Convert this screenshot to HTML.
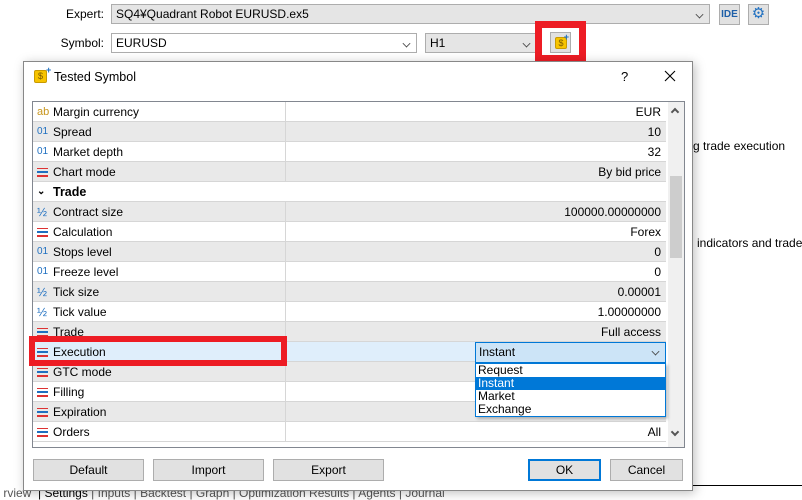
<!DOCTYPE html>
<html><head><meta charset="utf-8"><style>
*{box-sizing:border-box;margin:0;padding:0}
body{width:802px;height:498px;background:#fff;font-family:"Liberation Sans",sans-serif;font-size:12px;color:#000;position:relative;overflow:hidden}
.a{position:absolute;white-space:nowrap}
.combo{position:absolute;border:1px solid #adadad;height:20px;line-height:18px;padding-left:4px}
.chev{position:absolute;right:6px;top:6px;width:7px;height:7px;border-right:1px solid #444;border-bottom:1px solid #444;transform:rotate(45deg) scale(.8)}
.row{position:absolute;left:33px;width:633px;height:20px;line-height:20px;border-bottom:1px solid #d6d6d6}
.row .n{position:absolute;left:20px}
.row .v{position:absolute;right:5px}
.row .d{position:absolute;left:252px;top:0;bottom:0;border-left:1px solid #d6d6d6}
.ic{position:absolute;left:4px;font-size:10px}
.btn{position:absolute;height:22px;border:1px solid #adadad;background:#e1e1e1;text-align:center;line-height:20px}
.lines{position:absolute;left:4px;top:6px;width:11px;height:9px;background:linear-gradient(#d33 0 1px,transparent 1px 3px,#1e6fc0 3px 5px,transparent 5px 7px,#d33 7px 8px)}
</style></head><body>
<div class="a" style="right:698px;top:7px">Expert:</div>
<div class="combo" style="left:111px;top:4px;width:599px;background:#e5e5e5">SQ4¥Quadrant Robot EURUSD.ex5<div class="chev"></div></div>
<div class="btn" style="left:719px;top:4px;width:21px;height:21px;font-size:10px;color:#1e5fa8;font-weight:bold;line-height:19px">IDE</div>
<div class="btn" style="left:748px;top:4px;width:21px;height:21px;color:#1e6fc0;font-size:15px;line-height:18px">⚙</div>
<div class="a" style="right:698px;top:36px">Symbol:</div>
<div class="combo" style="left:111px;top:33px;width:306px;background:#fff">EURUSD<div class="chev"></div></div>
<div class="combo" style="left:425px;top:33px;width:112px;background:#e5e5e5">H1<div class="chev"></div></div>
<div class="a" style="left:535px;top:21px;width:51px;height:41px;border:7px solid #ed1c24;background:#fff"></div>
<div class="btn" style="left:550px;top:32px;width:21px;height:21px"><div class="a" style="left:4px;top:4px;width:12px;height:12px;background:#f7c400;border:1px solid #c89a00;border-radius:2px;font-size:9px;line-height:10px;color:#7a5a00">$</div><div class="a" style="right:1px;top:0;color:#1e6fc0;font-size:9px;font-weight:bold;line-height:8px">+</div></div>
<div class="a" style="left:693px;top:139px">g trade execution</div>
<div class="a" style="left:697px;top:236px">indicators and trades</div>
<div class="a" style="left:693px;top:485px;width:109px;border-top:1px solid #000"></div>
<div class="a" style="left:0;top:486px;width:802px;height:12px;color:#555;line-height:14px;white-space:nowrap">&nbsp;rview <span style="color:#000">&nbsp;|&nbsp;</span><span style="color:#000">Settings</span> | Inputs | Backtest | Graph | Optimization Results | Agents | Journal</div>
<div class="a" style="left:23px;top:61px;width:670px;height:430px;background:#fff;border:1px solid #888;box-shadow:2px 2px 10px rgba(0,0,0,.25)">
<div class="a" style="left:10px;top:8px;width:13px;height:13px;background:#f7c400;border:1px solid #c89a00;border-radius:2px;font-size:9px;line-height:11px;text-align:center;color:#7a5a00">$</div>
<div class="a" style="left:22px;top:3px;color:#1e6fc0;font-size:9px;font-weight:bold">+</div>
<div class="a" style="left:30px;top:8px;font-size:12.5px">Tested Symbol</div>
<div class="a" style="left:597px;top:7px;font-size:13px">?</div>
<svg class="a" style="left:640px;top:8px" width="12" height="12"><path d="M1 1L11 11M11 1L1 11" stroke="#000" stroke-width="1.1"/></svg>
<div class="a" style="left:8px;top:39px;width:653px;height:347px;border:1px solid #828790;overflow:hidden;background:#fff">
<div class="a" style="left:635px;top:0;width:16px;height:345px;background:#f0f0f0"></div>
<div class="a" style="left:637px;top:74px;width:12px;height:82px;background:#cdcdcd"></div>
<div class="a" style="left:639px;top:7px;width:6px;height:6px;border-left:2px solid #555;border-top:2px solid #555;transform:rotate(45deg)"></div>
<div class="a" style="left:639px;top:327px;width:6px;height:6px;border-right:2px solid #555;border-bottom:2px solid #555;transform:rotate(45deg)"></div>
</div>
</div>
<div class="row" style="top:102px;background:#fff"><span class="ic" style="color:#c8961e;font-size:11px">ab</span><span class="n">Margin currency</span><div class="d"></div><span class="v">EUR</span></div>
<div class="row" style="top:122px;background:#e9e9e9"><span class="ic" style="color:#1e6fc0">01</span><span class="n">Spread</span><div class="d"></div><span class="v">10</span></div>
<div class="row" style="top:142px;background:#fff"><span class="ic" style="color:#1e6fc0">01</span><span class="n">Market depth</span><div class="d"></div><span class="v">32</span></div>
<div class="row" style="top:162px;background:#e9e9e9"><span class="lines"></span><span class="n">Chart mode</span><div class="d"></div><span class="v">By bid price</span></div>
<div class="row" style="top:182px;background:#fff;font-weight:bold;font-size:12.5px"><span class="ic" style="font-size:10px">⌄</span><span class="n">Trade</span></div>
<div class="row" style="top:202px;background:#e9e9e9"><span class="ic" style="color:#1e6fc0;font-size:12px">½</span><span class="n">Contract size</span><div class="d"></div><span class="v">100000.00000000</span></div>
<div class="row" style="top:222px;background:#fff"><span class="lines"></span><span class="n">Calculation</span><div class="d"></div><span class="v">Forex</span></div>
<div class="row" style="top:242px;background:#e9e9e9"><span class="ic" style="color:#1e6fc0">01</span><span class="n">Stops level</span><div class="d"></div><span class="v">0</span></div>
<div class="row" style="top:262px;background:#fff"><span class="ic" style="color:#1e6fc0">01</span><span class="n">Freeze level</span><div class="d"></div><span class="v">0</span></div>
<div class="row" style="top:282px;background:#e9e9e9"><span class="ic" style="color:#1e6fc0;font-size:12px">½</span><span class="n">Tick size</span><div class="d"></div><span class="v">0.00001</span></div>
<div class="row" style="top:302px;background:#fff"><span class="ic" style="color:#1e6fc0;font-size:12px">½</span><span class="n">Tick value</span><div class="d"></div><span class="v">1.00000000</span></div>
<div class="row" style="top:322px;background:#e9e9e9"><span class="lines"></span><span class="n">Trade</span><div class="d"></div><span class="v">Full access</span></div>
<div class="row" style="top:342px;background:#dfeefb"><span class="lines"></span><span class="n">Execution</span><div class="d"></div></div>
<div class="row" style="top:362px;background:#e9e9e9"><span class="lines"></span><span class="n">GTC mode</span><div class="d"></div></div>
<div class="row" style="top:382px;background:#fff"><span class="lines"></span><span class="n">Filling</span><div class="d"></div></div>
<div class="row" style="top:402px;background:#e9e9e9"><span class="lines"></span><span class="n">Expiration</span><div class="d"></div></div>
<div class="row" style="top:422px;background:#fff"><span class="lines"></span><span class="n">Orders</span><div class="d"></div><span class="v">All</span></div>
<div class="a" style="left:29px;top:336px;width:258px;height:30px;border:6px solid #ed1c24"></div>
<div class="a" style="left:475px;top:342px;width:191px;height:21px;background:#cce4f7;border:1px solid #0078d7;line-height:19px;padding-left:3px">Instant<div class="chev" style="top:5px"></div></div>
<div class="a" style="left:475px;top:363px;width:191px;height:54px;background:#fff;border:1px solid #0078d7;line-height:13px;box-shadow:2px 2px 3px rgba(0,0,0,.25)">
<div style="padding-left:2px">Request</div><div style="padding-left:2px;background:#0078d7;color:#fff">Instant</div><div style="padding-left:2px">Market</div><div style="padding-left:2px">Exchange</div></div>
<div class="btn" style="left:33px;top:459px;width:111px">Default</div>
<div class="btn" style="left:153px;top:459px;width:111px">Import</div>
<div class="btn" style="left:273px;top:459px;width:111px">Export</div>
<div class="btn" style="left:528px;top:459px;width:73px;border:2px solid #0078d7;line-height:18px">OK</div>
<div class="btn" style="left:610px;top:459px;width:73px">Cancel</div>
</body></html>
